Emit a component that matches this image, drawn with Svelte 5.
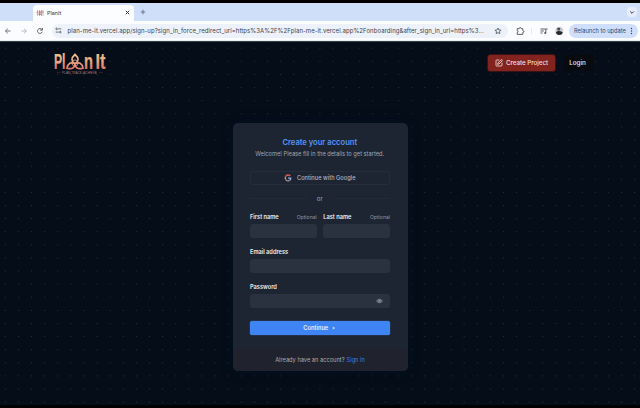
<script>
  const url = 'plan-me-it.vercel.app/sign-up?sign_in_force_redirect_url=https%3A%2F%2Fplan-me-it.vercel.app%2Fonboarding&after_sign_in_url=https%3...';
</script>

<div class="window">
  <div class="tabs">
    <div class="tab">
      <svg class="fav" width="8" height="8" viewBox="0 0 8 8"><path d="M1.500 1.200v5.600M3.500 1v6M5.500 1v6M7 1.200v5.600" stroke="#8d838a" stroke-width=".6"/><path d="M.5 3.200h2M2.700 5.500L4 2l1.300 3.500zM5.500 3h2" fill="none" stroke="#a8554f" stroke-width=".6"/></svg>
      <span>PlanIt</span>
      <svg class="close" width="5" height="5" viewBox="0 0 5 5"><path d="M.8.8l3.4 3.4M4.2.8L.8 4.2" stroke="#30343a" stroke-width="1"/></svg>
    </div>
    <svg class="plus" width="6" height="6" viewBox="0 0 6 6"><path d="M3 .7v4.6M.7 3h4.6" stroke="#596371" stroke-width=".8"/></svg>
    <div class="chev"><svg width="6" height="5" viewBox="0 0 6 5"><path d="M1.2 1.5L3 3.3l1.8-1.8" fill="none" stroke="#353a42" stroke-width="1"/></svg></div>
  </div>

  <div class="toolbar">
    <svg class="nav" width="44" height="10" viewBox="0 0 44 10" fill="none" stroke="#62666c" stroke-width=".9">
      <path d="M8.5 5h-5M5.8 2.7L3.4 5l2.4 2.3"/>
      <path d="M19.5 5h5M22 2.7L24.4 5 22 7.3" stroke="#b4b7bd"/>
      <path d="M39.8 3.500a2.400 2.400 0 1 0 .4 2.200M40.400 1.900v2.200h-2.200" stroke="#4d5157"/>
    </svg>
    <div class="address">
      <svg class="tune" width="7" height="7" viewBox="0 0 7 7" fill="none" stroke="#4b5057" stroke-width=".8"><path d="M3.2 1.9h3M.7 5.1h3"/><circle cx="1.6" cy="1.9" r=".8"/><circle cx="5.3" cy="5.1" r=".8"/></svg>
      <span class="url">{url}</span>
      <svg class="star" width="8" height="8" viewBox="0 0 8 8"><path d="M4 1l.9 2 2.2.2-1.7 1.4.5 2.1L4 5.6 2.1 6.7l.5-2.1L.9 3.2 3.1 3z" fill="none" stroke="#4e535b" stroke-width=".8"/></svg>
    </div>
    <svg class="tools" width="50" height="10" viewBox="0 0 50 10">
      <path d="M2.2 2.7h2c0-1.6 2-1.6 2 0h1.6v1.9c1.5 0 1.5 1.9 0 1.9v1.9H2.2V6.6c1.2 0 1.2-1.9 0-1.9z" fill="none" stroke="#4b5057" stroke-width=".9"/>
      <path d="M16.5 2v6" stroke="#cfdbf2" stroke-width=".6"/>
      <path d="M25.500 3h5M25.500 5h3.300M25.500 7h2M30.800 7V3h1.700" fill="none" stroke="#4b5057" stroke-width=".9"/><circle cx="30.2" cy="7" r="1" fill="#4b5057"/>
      <circle cx="44.3" cy="5" r="4" fill="#c8cbd1"/><circle cx="43.7" cy="3.1" r="1.6" fill="#4f4c4d"/><path d="M40.9 6.2q3-2.400 6.900.2-.8 2.600-3.500 2.600t-3.400-2.800z" fill="#26282d"/>
    </svg>
    <div class="relaunch"><span>Relaunch to update</span>
      <svg width="3" height="8" viewBox="0 0 3 8" fill="#2c3f66"><circle cx="1.5" cy="1.5" r=".7"/><circle cx="1.5" cy="4" r=".7"/><circle cx="1.5" cy="6.5" r=".7"/></svg>
    </div>
  </div>

  <main>
    <svg class="dots" width="640" height="364">
      <defs>
        <pattern id="dot" x="4.8" y="5.7" width="13.11" height="13.11" patternUnits="userSpaceOnUse"><rect width="1" height="1" fill="#29323b"/></pattern>
      </defs>
      <rect width="640" height="364" fill="url(#dot)"/>
    </svg>

    <header>
      <svg class="logo" width="56" height="31" viewBox="0 -4 56 31">
        <defs><linearGradient id="warm" gradientUnits="userSpaceOnUse" x1="0" y1="2" x2="0" y2="18"><stop stop-color="#edc48c"/><stop offset=".5" stop-color="#eba981"/><stop offset="1" stop-color="#df7769"/></linearGradient></defs>
        <g fill="url(#warm)" stroke="url(#warm)" stroke-width=".2" class="word">
          <text x="1" y="18" textLength="11.500" lengthAdjust="spacingAndGlyphs">Pl</text>
          <text x="31" y="18" textLength="9" lengthAdjust="spacingAndGlyphs">n</text>
          <text x="42.500" y="18" textLength="10" lengthAdjust="spacingAndGlyphs">It</text>
        </g>
        <g fill="none" stroke="url(#warm)" stroke-width="1.700">
          <path d="M22 3.500c-4 3.500-4 6.500 0 9.500 4-3 4-6 0-9.500z"/>
          <path d="M14 17.200c1-5 4-6.500 8-4.500 0 4-3 6-8 4.500z"/>
          <path d="M30 17.200c-1-5-4-6.500-8-4.500 0 4 3 6 8 4.500z"/>
          <circle cx="22" cy="12" r="3.100" stroke-width=".8"/>
        </g>
        <path d="M3.500 21.500h4M46 21.500h4" stroke="#6d3b40" stroke-width=".4"/>
        <text class="tagline" x="9" y="22.600" textLength="35" lengthAdjust="spacingAndGlyphs">PLAN,TRACK,ACHIEVE</text>
      </svg>
      <div class="actions">
        <button class="create">
          <svg width="8" height="8" viewBox="0 0 24 24" fill="none" stroke="#f1d9d7" stroke-width="2.600" stroke-linecap="round" stroke-linejoin="round"><path d="M12 3H5a2 2 0 0 0-2 2v14a2 2 0 0 0 2 2h14a2 2 0 0 0 2-2v-7"/><path d="M18.400 2.600a2.100 2.100 0 0 1 3 3L12 15l-4 1 1-4z"/></svg>
          <span>Create Project</span>
        </button>
        <button class="login"><span>Login</span></button>
      </div>
    </header>

    <section class="card">
      <div class="body">
        <h1>Create your account</h1>
        <p class="sub">Welcome! Please fill in the details to get started.</p>
        <button class="google">
          <svg width="8" height="8" viewBox="0 0 8 8" fill="none" stroke-width="1.300"><path d="M6.300 2A2.800 2.800 0 0 0 1.600 2.600" stroke="#dc5c50"/><path d="M1.600 2.600a2.800 2.800 0 0 0 0 2.800" stroke="#c99a52"/><path d="M1.600 5.400a2.800 2.800 0 0 0 4 1" stroke="#9a8c82"/><path d="M4 4.100h2.800q0 1.500-1.200 2.300" stroke="#8aa9dc"/></svg>
          <span>Continue with Google</span>
        </button>
        <div class="divider"><i></i><span>or</span><i></i></div>
        <div class="names">
          <div class="field"><div class="label"><b>First name</b><em>Optional</em></div><div class="input"></div></div>
          <div class="field"><div class="label"><b>Last name</b><em>Optional</em></div><div class="input"></div></div>
        </div>
        <div class="field gap"><div class="label"><b>Email address</b></div><div class="input"></div></div>
        <div class="field gap"><div class="label"><b>Password</b></div>
          <div class="input"><svg width="7" height="6" viewBox="0 0 7 6"><path d="M.5 3Q3.500-.8 6.500 3 3.500 6.800.5 3z" fill="#59616e" stroke="#7f8792" stroke-width=".7"/><circle cx="3.500" cy="3" r="1" fill="#9299a4"/></svg></div>
        </div>
        <button class="continue"><span>Continue</span><svg width="4" height="4" viewBox="0 0 4 4"><path d="M.8.500L3.200 2 .8 3.500z" fill="#c3dafd"/></svg></button>
      </div>
      <footer><span>Already have an account?</span><a href="#signin">Sign in</a></footer>
    </section>
  </main>
</div>

<style>
  :global(body) { margin: 0; background: #000; overflow: hidden; }
  * { box-sizing: border-box; }
  svg { display: block; flex: none; }
  span, b, em, h1, p, a { white-space: nowrap; }
  button { border: 0; padding: 0; font: inherit; display: flex; align-items: center; }
  .window { width: 640px; height: 408px; padding-top: 3px; background: #000; font-family: Inter, "Liberation Sans", sans-serif; display: flex; flex-direction: column; }
  .tabs { height: 18px; background: #d0dff9; display: flex; align-items: center; flex: none; }
  .tab { margin: 2px 0 0 33px; width: 101px; height: 16px; border-radius: 4px 4px 0 0; background: #fcfdff; display: flex; align-items: center; padding: 0 4px 1px 3px; font-size: 5.4px; color: #353940; }
  .tab span { margin-left: 3px; }
  .close { margin-left: auto; }
  .plus { margin-left: 6px; }
  .chev { margin-left: auto; margin-right: 3px; width: 10px; height: 10px; border-radius: 4px; background: #e5edfc; display: flex; align-items: center; justify-content: center; }
  .toolbar { height: 20px; background: #fafcff; display: flex; align-items: center; flex: none; border-bottom: 1px solid #e8edf1; }
  .nav { margin-left: 2px; }
  .address { margin-left: 6px; width: 456px; height: 14px; border-radius: 7px; background: #edf1fa; display: flex; align-items: center; padding: 0 6px 0 3px; }
  .url { margin-left: 5.500px; font-size: 6px; color: #3d4249; letter-spacing: .07px; }
  .star { margin-left: auto; }
  .tools { margin-left: 7px; }
  .relaunch { margin-left: 4px; width: 69px; height: 14px; border-radius: 7px; background: #cfdffb; display: flex; align-items: center; justify-content: space-between; padding: 0 5px 0 5px; font-size: 5.700px; color: #30456b; }
  main { height: 364px; background: #050d18; position: relative; border-top: 1px solid #35404a; }
  .dots { position: absolute; inset: 0; }
  header { position: relative; height: 82px; padding: 9px 47.500px 0 53px; display: flex; justify-content: space-between; }
  .logo { margin-top: -4px; overflow: visible; }
  .word { font-family: "Liberation Sans", sans-serif; font-weight: bold; font-size: 21.500px; }
  .tagline { font-family: "Liberation Sans", sans-serif; font-size: 3.200px; fill: #a97a7a; }
  .actions { display: flex; gap: 7.500px; padding-top: 3.500px; height: 20px; font-size: 6.300px; font-weight: 500; }
  .create { width: 67px; height: 16px; border-radius: 2.500px; background: #82231d; color: #f4dedd; gap: 3px; justify-content: center; box-shadow: 0 0 1px 1px #3d1518; }
  .create span { letter-spacing: -.05px; }
  .login { width: 30px; height: 16px; border-radius: 3px; background: #070a0f; color: #e9ebed; justify-content: center; }
  .card { position: relative; margin-left: 232.500px; width: 175px; height: 248px; border-radius: 5px; overflow: hidden; background: #1d2532; box-shadow: 0 0 10px 2px #03101f; margin-top: -1.500px; display: flex; flex-direction: column; }
  .body { height: 226px; padding: 14.500px 17.500px 0 17px; }
  h1 { margin: 0; line-height: 11px; font-size: 7.600px; font-weight: 600; color: #5794f3; text-align: center; }
  .sub { margin: 0; line-height: 11px; font-size: 5.700px; color: #a0a7b2; text-align: center; }
  .google { margin-top: 11.500px; height: 14px; width: 100%; border: 1px solid #242d3a; border-radius: 3px; background: transparent; color: #b1b7c0; font-size: 5.700px; font-weight: 500; justify-content: center; gap: 5px; }
  .divider { margin-top: 9px; height: 10px; display: flex; align-items: center; gap: 11px; font-size: 6px; color: #a7adb7; }
  .divider i { flex: 1; height: 1px; background: #222c39; }
  .names { margin-top: 8px; display: flex; gap: 6px; }
  .field { flex: 1; min-width: 0; }
  .label { height: 10px; display: flex; justify-content: space-between; align-items: center; font-size: 5.700px; color: #eceef2; padding-left: .5px; }
  .label b { font-weight: 600; letter-spacing: -.02px; }
  .label em { font-style: normal; font-size: 5.100px; color: #8e96a2; }
  .input { margin-top: 2px; height: 14px; border-radius: 3px; background: #2a3240; display: flex; align-items: center; justify-content: flex-end; padding-right: 7.500px; }
  .gap { margin-top: 9px; }
  .continue { margin-top: 13px; width: 100%; height: 14px; border-radius: 2.500px; background: #3e84f5; box-shadow: 0 0 1px #6ea6ff; color: #e5efff; font-size: 5.700px; font-weight: 600; justify-content: center; gap: 4px; }
  footer { height: 22px; background: #20232e; display: flex; align-items: center; justify-content: center; gap: 2px; font-size: 5.700px; color: #a4aab4; }
  footer a { color: #347fe9; text-decoration: none; }
</style>
